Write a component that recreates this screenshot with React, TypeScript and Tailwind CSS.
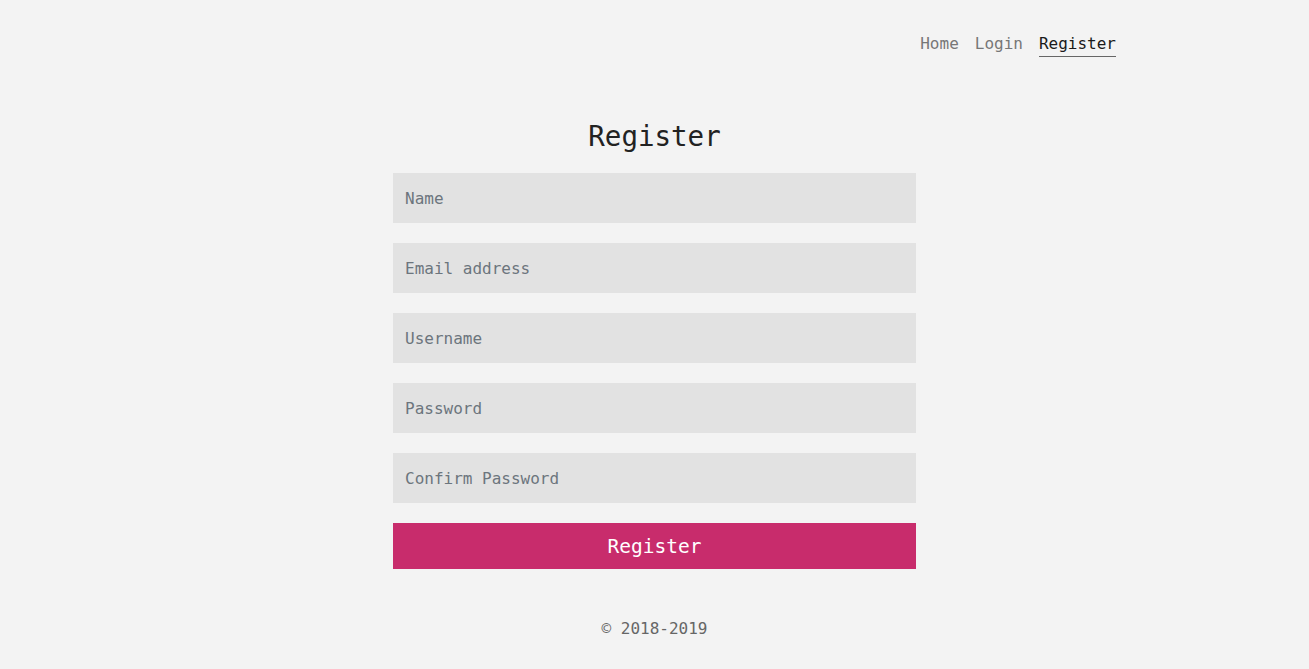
export default function App() {
  const fields = ["Name", "Email address", "Username", "Password", "Confirm Password"];
  return (
    <div
      className="min-h-screen bg-[#f3f3f3] text-[#212529] flex flex-col"
      style={{ fontFamily: '"DejaVu Sans Mono", monospace' }}
    >
      {/* Top nav */}
      <nav className="flex justify-end gap-4 pt-[32px] pr-[193px] text-[16px] leading-6">
        <a className="text-[#777777]">Home</a>
        <a className="text-[#777777]">Login</a>
        <a className="text-[#1a1a1a] border-b border-[#666666]">Register</a>
      </nav>

      {/* Form */}
      <main className="flex flex-col items-center mt-[59px]">
        <h1 className="text-[27.5px] leading-[40px] text-[#222222]">Register</h1>
        <form className="w-[523px] flex flex-col gap-5 mt-[17px]">
          {fields.map((f) => (
            <input
              key={f}
              placeholder={f}
              type={f.includes("Password") ? "password" : "text"}
              className="h-[50px] w-full bg-[#e2e2e2] px-3 text-[16px] outline-none placeholder:text-[#6c757d]"
              style={{ fontFamily: '"DejaVu Sans Mono", monospace' }}
            />
          ))}
          <button
            type="button"
            className="h-[46px] w-full bg-[#c82c6c] text-white text-[19.5px] pt-[2px]"
            style={{ fontFamily: '"DejaVu Sans Mono", monospace' }}
          >
            Register
          </button>
        </form>
        <footer className="mt-[48px] text-[16px] text-[#666666]">© 2018-2019</footer>
      </main>
    </div>
  );
}
